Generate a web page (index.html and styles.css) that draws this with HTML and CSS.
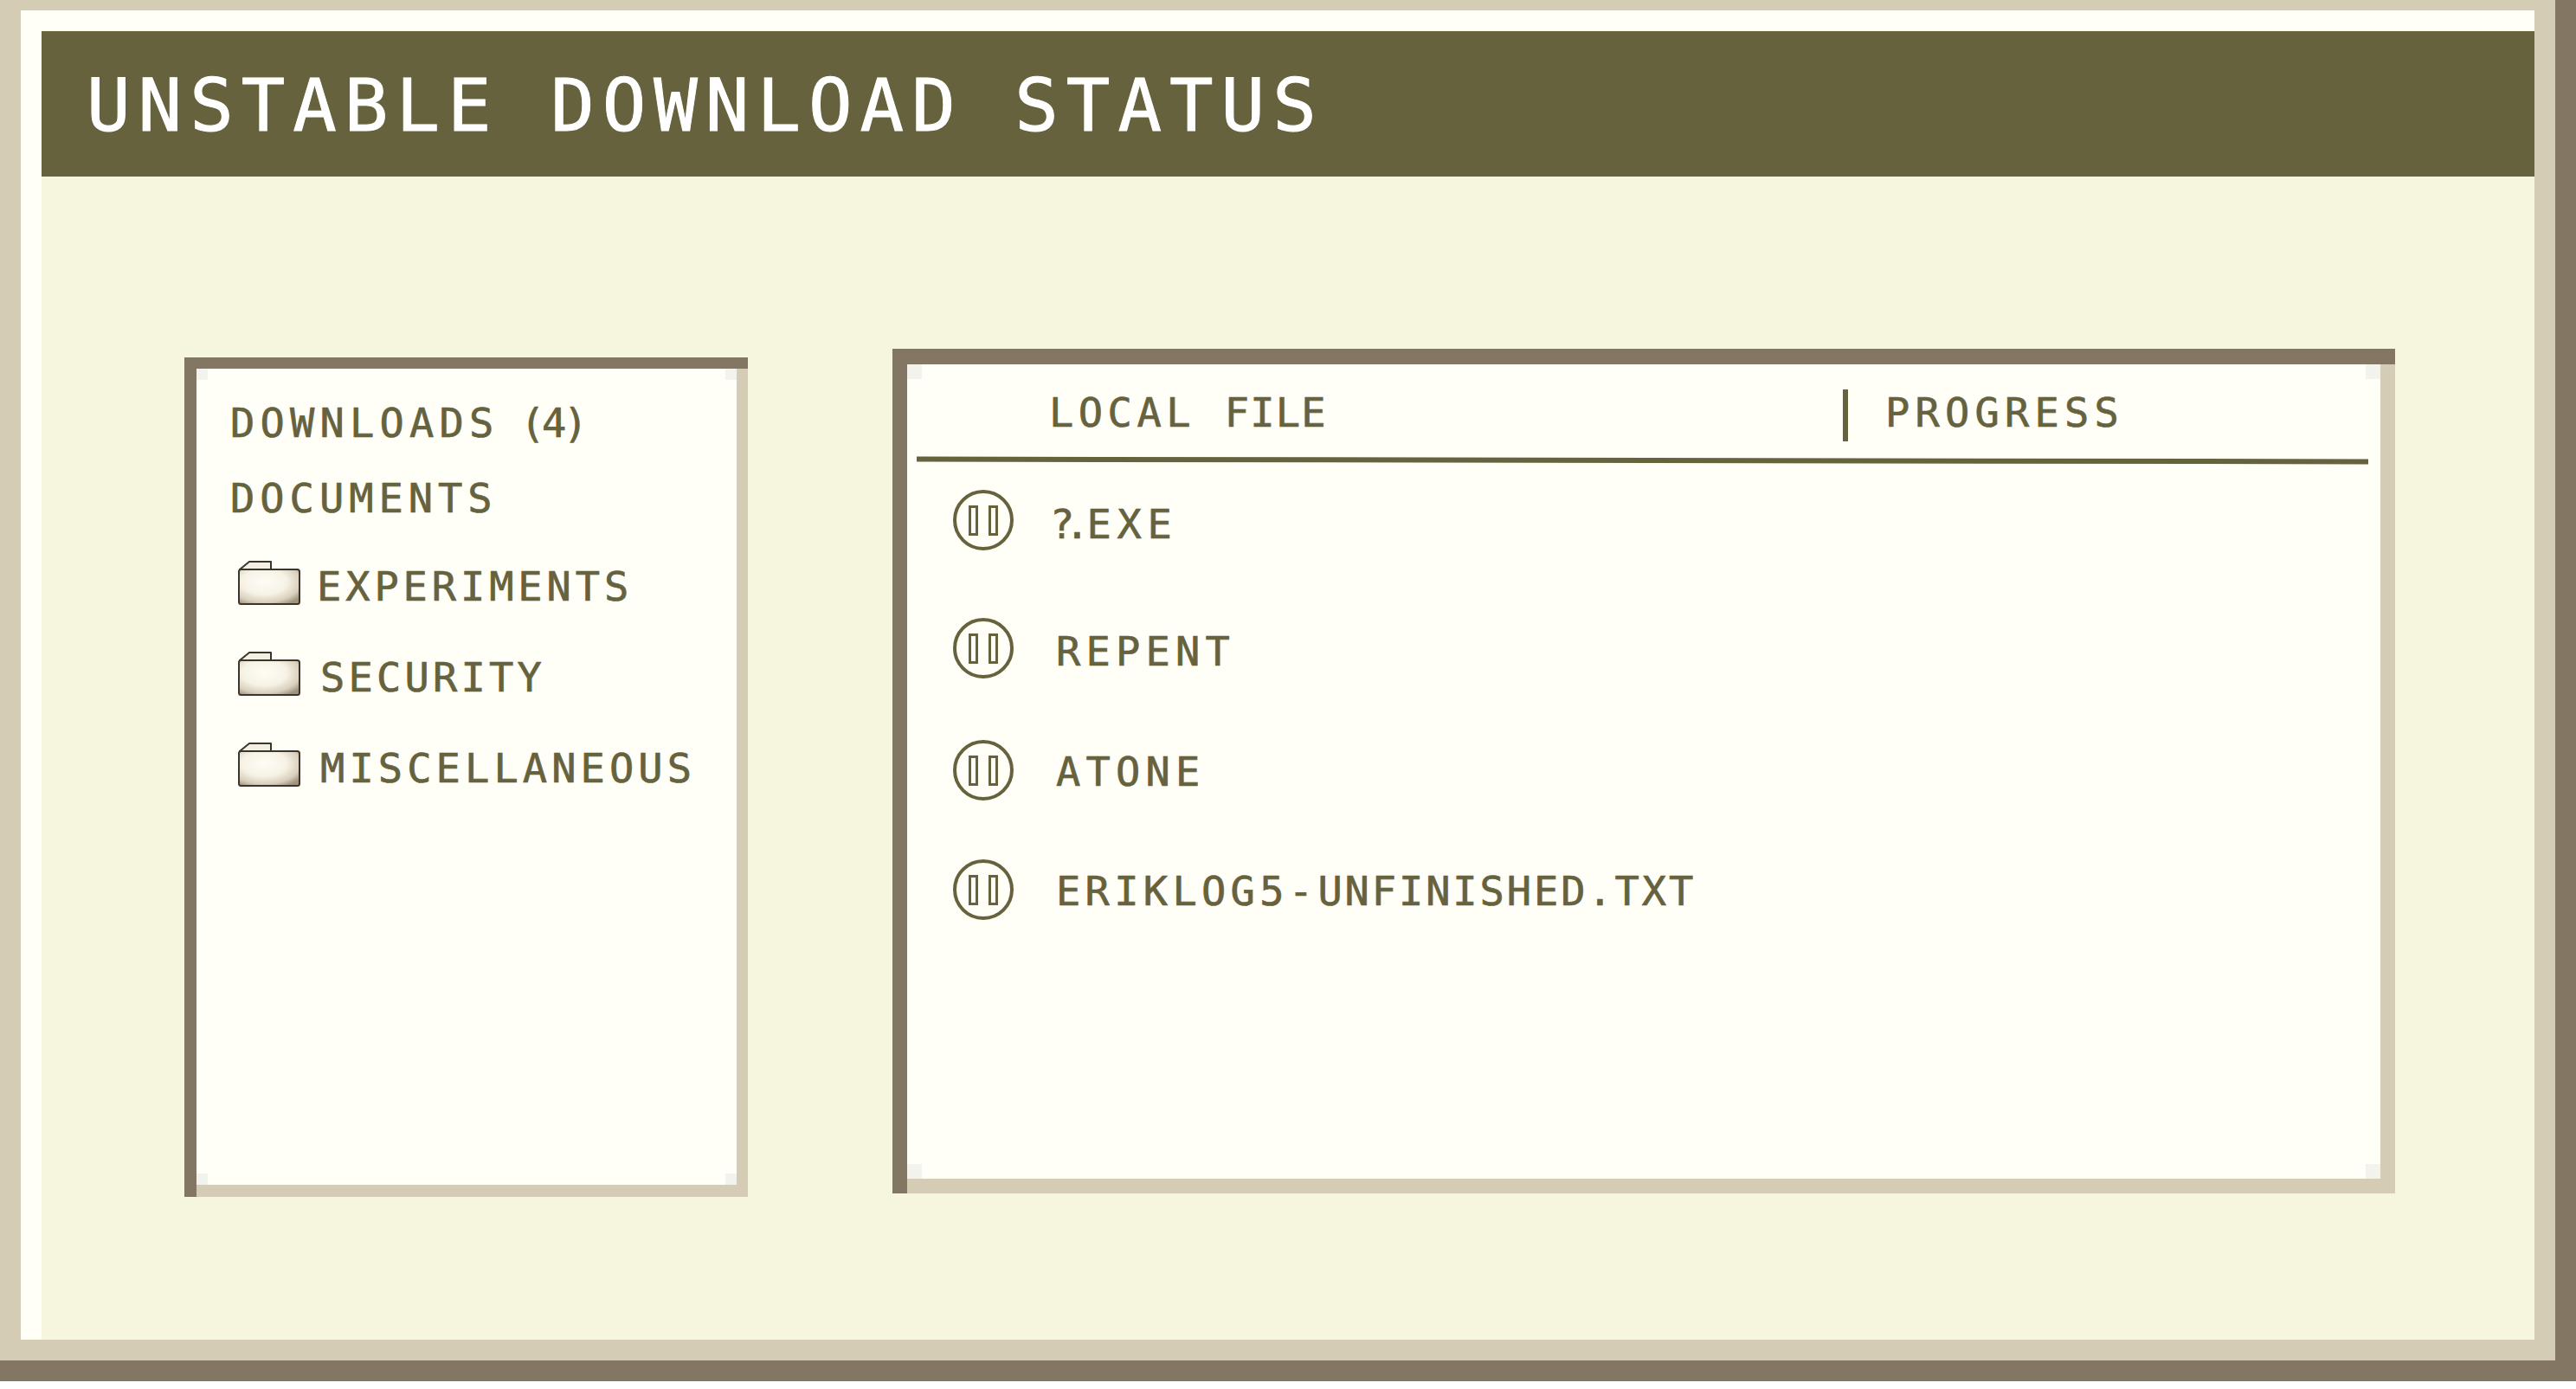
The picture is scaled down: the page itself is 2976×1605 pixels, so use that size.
FILE: index.html
```html
<!DOCTYPE html>
<html lang="en">
<head>
<meta charset="utf-8">
<title>Unstable Download Status</title>
<link rel="stylesheet" href="styles.css">
</head>
<body>
<div class="shadow">
  <div class="bevel">
    <div class="window">
      <header class="titlebar"><h1 class="title">UNSTABLE DOWNLOAD STATUS</h1></header>
      <main class="content">
        <section class="panel panel-side">
          <div class="well well-side">
            <div class="side-line side-first">DOWNLOADS<span class="count"> (4</span>)</div>
            <div class="side-line side-second">DOCUMENTS</div>
            <ul class="folders">
              <li class="folder folder-tight">
                <svg class="folder-icon" viewBox="0 0 72 51" aria-hidden="true">
                  <defs>
                    <radialGradient id="fg" cx="0.42" cy="0.36" r="0.74">
                      <stop offset="0" stop-color="#fefdf6"/>
                      <stop offset="0.5" stop-color="#f6f2e5"/>
                      <stop offset="0.8" stop-color="#d9cfbc"/>
                      <stop offset="1" stop-color="#9f937e"/>
                    </radialGradient>
                  </defs>
                  <path class="folder-tab" d="M2 10 L13 1 H38 V10 Z"/>
                  <rect class="folder-body" x="1" y="10" width="70" height="40" rx="2.5"/>
                </svg>
                <span class="folder-name">EXPERIMENTS</span>
              </li>
              <li class="folder folder-security">
                <svg class="folder-icon" viewBox="0 0 72 51" aria-hidden="true">
                  <path class="folder-tab" d="M2 10 L13 1 H38 V10 Z"/>
                  <rect class="folder-body" x="1" y="10" width="70" height="40" rx="2.5"/>
                </svg>
                <span class="folder-name">SECURITY</span>
              </li>
              <li class="folder">
                <svg class="folder-icon" viewBox="0 0 72 51" aria-hidden="true">
                  <path class="folder-tab" d="M2 10 L13 1 H38 V10 Z"/>
                  <rect class="folder-body" x="1" y="10" width="70" height="40" rx="2.5"/>
                </svg>
                <span class="folder-name">MISCELLANEOUS</span>
              </li>
            </ul>
          </div>
        </section>
        <section class="panel panel-main">
          <div class="well well-main">
            <div class="table-head">
              <span class="head-file">LOCAL <span class="head-file-end">FILE</span></span>
              <span class="head-progress">PROGRESS</span>
            </div>
            <div class="rule"></div>
            <ul class="rows">
              <li class="row row-exe">
                <svg class="pause" viewBox="0 0 70 70" aria-hidden="true"><circle cx="35" cy="35" r="33"/><rect x="19.5" y="19.5" width="8" height="32"/><rect x="42.5" y="19.5" width="8" height="32"/></svg>
                <span class="row-name"><span class="q">?</span><span class="dot">.</span>EXE</span>
              </li>
              <li class="row row-repent">
                <svg class="pause" viewBox="0 0 70 70" aria-hidden="true"><circle cx="35" cy="35" r="33"/><rect x="19.5" y="19.5" width="8" height="32"/><rect x="42.5" y="19.5" width="8" height="32"/></svg>
                <span class="row-name">REPENT</span>
              </li>
              <li class="row row-atone">
                <svg class="pause" viewBox="0 0 70 70" aria-hidden="true"><circle cx="35" cy="35" r="33"/><rect x="19.5" y="19.5" width="8" height="32"/><rect x="42.5" y="19.5" width="8" height="32"/></svg>
                <span class="row-name">ATONE</span>
              </li>
              <li class="row row-erik">
                <svg class="pause" viewBox="0 0 70 70" aria-hidden="true"><circle cx="35" cy="35" r="33"/><rect x="19.5" y="19.5" width="8" height="32"/><rect x="42.5" y="19.5" width="8" height="32"/></svg>
                <span class="row-name"><span class="erik-start">ERIKLOG5-</span>UNFINISHED.TXT</span>
              </li>
            </ul>
          </div>
        </section>
      </main>
    </div>
  </div>
</div>
</body>
</html>
```
FILE: styles.css
```css
* { box-sizing: border-box; }
html, body { margin: 0; padding: 0; background: #ffffff; }
body {
  width: 2976px;
  height: 1605px;
  overflow: hidden;
  font-family: "DejaVu Sans Mono", "Liberation Mono", monospace;
  font-size: 47px;
  line-height: 60px;
  letter-spacing: 6.2px;
  color: #66623e;
  -webkit-text-stroke: 0.7px #66623e;
}
ul { list-style: none; margin: 0; padding: 0; }

.shadow { height: 1596px; background: #837763; padding: 0 24px 24px 0; }
.bevel { height: 100%; background: #d5ccb5; padding: 12px 24px 24px 24px; }
.window {
  height: 100%;
  background: #fffff8;
  padding: 24px 0 0 24px;
  display: flex;
  flex-direction: column;
}

.titlebar {
  flex: none;
  height: 168px;
  background: #66623e;
  display: flex;
  align-items: center;
  padding: 4px 0 0 52px;
}
.title {
  margin: 0;
  font-size: 84px;
  font-weight: normal;
  line-height: 100px;
  letter-spacing: 9px;
  color: #ffffff;
  -webkit-text-stroke: 1px #ffffff;
}

.content {
  flex: 1;
  background: #f6f6de;
  display: flex;
  align-items: flex-start;
  padding-left: 165px;
}

.panel { background: #837763; flex: none; }
.panel-side { width: 651px; height: 970px; margin-top: 209px; padding: 13px 0 0 14px; }
.panel-main { width: 1736px; height: 976px; margin: 199px 0 0 167px; padding: 18px 0 0 17px; }

.well {
  height: 100%;
  background-color: #fffff8;
  background-repeat: no-repeat;
  border-right: solid #d5ccb5;
  border-bottom: solid #d5ccb5;
  background-image:
    linear-gradient(#f3f3ee, #f3f3ee), linear-gradient(#f3f3ee, #f3f3ee),
    linear-gradient(#f3f3ee, #f3f3ee), linear-gradient(#f3f3ee, #f3f3ee);
  background-position: left top, right top, left bottom, right bottom;
  background-origin: padding-box;
  background-clip: padding-box;
}
.well-side {
  border-width: 0 13px 14px 0;
  background-size: 13px 13px;
  padding: 33px 0 0 39px;
}
.well-main {
  border-width: 0 17px 17px 0;
  background-size: 17px 17px;
  padding: 26px 0 0 11px;
}

.count { letter-spacing: -3.5px; }
.side-second { margin-top: 27px; letter-spacing: 6px; }
.folders { display: flex; flex-direction: column; gap: 45px; margin: 42px 0 0 9px; }
.folder { display: flex; align-items: flex-start; height: 60px; }
.folder-icon { flex: none; width: 72px; height: 51px; display: block; }
.folder-name { margin-left: 23px; letter-spacing: 5.1px; }
.folder-tight .folder-name { margin-left: 19px; letter-spacing: 4.9px; }
.folder-security .folder-name { letter-spacing: 4.2px; }
.folder-tab { fill: #f3efe2; stroke: #3b362c; stroke-width: 2; stroke-linejoin: round; }
.folder-body { fill: url(#fg); stroke: #3b362c; stroke-width: 2; }

.table-head { display: flex; height: 60px; padding-left: 153px; }
.head-file { width: 917px; letter-spacing: 5.5px; }
.head-file-end { letter-spacing: 1.2px; }
.head-progress { border-left: 6px solid #66623e; height: 60px; margin-top: 3px; padding-left: 43px; line-height: 54px; }

.rule {
  height: 6px;
  width: 1677px;
  margin-top: 22px;
  background: #66623e;
  transform: rotate(0.1deg);
}

.rows { margin: 31px 0 0 42px; }
.row { display: flex; align-items: flex-start; height: 70px; }
.pause { flex: none; width: 70px; height: 70px; display: block; }
.pause circle { fill: none; stroke: #66623e; stroke-width: 4; }
.pause rect { fill: none; stroke: #66623e; stroke-width: 3; }
.row-name { margin-left: 42px; letter-spacing: 6.6px; }
.q { letter-spacing: -11px; }
.dot { letter-spacing: -3px; }
.row-exe .row-name { margin-top: 10px; }
.row-repent { margin-top: 78px; }
.row-repent .row-name { margin: 9px 0 0 49px; letter-spacing: 6.2px; }
.row-atone { margin-top: 71px; }
.row-atone .row-name { margin: 7px 0 0 49px; letter-spacing: 6.2px; }
.row-erik { margin-top: 68px; }
.row-erik .row-name { margin: 7px 0 0 49px; letter-spacing: 2.9px; }
.erik-start { letter-spacing: 5.3px; }
```
